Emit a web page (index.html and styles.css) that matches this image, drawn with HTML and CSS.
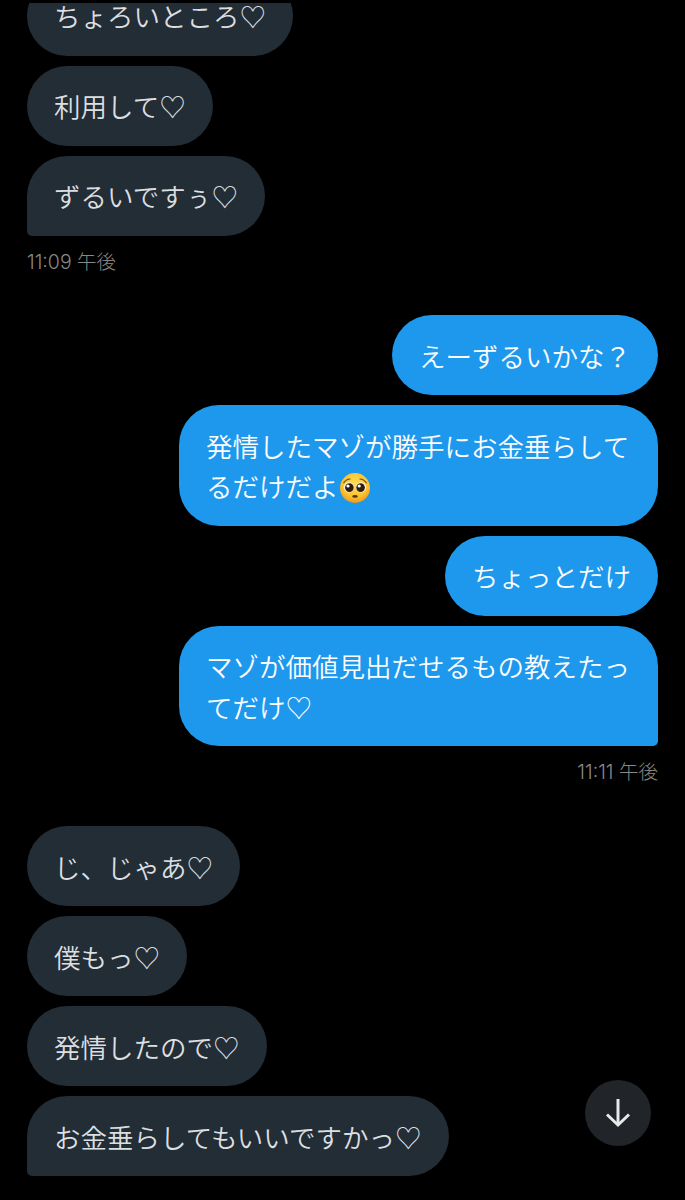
FILE: index.html
```html
<!DOCTYPE html>
<html lang="ja">
<head>
<meta charset="utf-8">
<title>メッセージ</title>
<link rel="stylesheet" href="styles.css">
</head>
<body>
<main class="viewport">
  <div class="thread">
    <section class="group received">
      <div class="bubble">ちょろいところ♡</div>
      <div class="bubble">利用して♡</div>
      <div class="bubble last">ずるいですぅ♡</div>
      <time class="stamp">11:09 午後</time>
    </section>
    <section class="group sent">
      <div class="bubble">えーずるいかな？</div>
      <div class="bubble">発情したマゾが勝手にお金垂らしてるだけだよ<svg class="emoji" viewBox="0 0 30 30" aria-label="🥺" role="img">
        <defs><radialGradient id="face" cx="50%" cy="35%" r="65%"><stop offset="0" stop-color="#ffdc55"/><stop offset="0.7" stop-color="#fac02e"/><stop offset="1" stop-color="#e99a1c"/></radialGradient></defs>
        <circle cx="15" cy="15" r="15" fill="url(#face)"/>
        <path d="M3.8 9.8 Q6 6.2 10 6 M26.2 9.8 Q24 6.2 20 6" fill="none" stroke="#6d4215" stroke-width="1.2" stroke-linecap="round"/>
        <circle cx="9" cy="14.2" r="5.2" fill="#fff3d6"/><circle cx="21" cy="14.2" r="5.2" fill="#fff3d6"/>
        <circle cx="9.4" cy="14.6" r="4.3" fill="#2e1c10"/><circle cx="20.6" cy="14.6" r="4.3" fill="#2e1c10"/>
        <circle cx="8" cy="13" r="1.6" fill="#fff"/><circle cx="19.2" cy="13" r="1.6" fill="#fff"/>
        <ellipse cx="15" cy="23.4" rx="2.8" ry="1.3" fill="#5b3412"/>
      </svg></div>
      <div class="bubble">ちょっとだけ</div>
      <div class="bubble last">マゾが価値見出だせるもの教えたってだけ♡</div>
      <time class="stamp">11:11 午後</time>
    </section>
    <section class="group received">
      <div class="bubble">じ、じゃあ♡</div>
      <div class="bubble">僕もっ♡</div>
      <div class="bubble">発情したので♡</div>
      <div class="bubble last">お金垂らしてもいいですかっ♡</div>
    </section>
  </div>
  <button class="scroll-down" type="button" aria-label="下へスクロール">
    <svg viewBox="0 0 30 30" width="30" height="30" fill="none" stroke="#e7e9ea" stroke-width="3" stroke-linejoin="miter"><path d="M15 1V27"/><path d="M4 16.5 15 27 26 16.5"/></svg>
  </button>
</main>
</body>
</html>
```
FILE: styles.css
```css
html, body {
  margin: 0;
  background: #000;
}
body {
  font-family: "Noto Sans CJK JP", "Liberation Sans", sans-serif;
  height: 1200px;
  overflow: hidden;
}
.viewport {
  position: relative;
  height: 1200px;
  padding-top: 3px;
  box-sizing: border-box;
}
.thread {
  height: 1197px;
  overflow: hidden;
  display: flex;
  flex-direction: column;
}
.group {
  display: flex;
  flex-direction: column;
  gap: 9.75px;
  padding: 0 27px;
  flex: none;
}
.group:first-child {
  margin-top: -27.5px;
}
.group + .group {
  margin-top: 41.5px;
}
.group:last-child {
  margin-top: 42px;
}
.received {
  align-items: flex-start;
}
.sent {
  align-items: flex-end;
}
.bubble {
  box-sizing: border-box;
  width: fit-content;
  max-width: 479px;
  padding: 20.875px 27px 18.875px;
  border-radius: 40px;
  font-size: 26.5px;
  line-height: 40.5px;
  font-weight: 350;
  line-break: loose;
}
.received .bubble {
  background: #232d35;
  color: #dcdfe1;
}
.sent .bubble {
  background: #1d98ec;
  color: #fbfdff;
}
.received .last {
  border-bottom-left-radius: 5px;
}
.sent .last {
  border-bottom-right-radius: 5px;
}
.emoji {
  width: 30px;
  height: 30px;
  margin-left: 1px;
  vertical-align: -6px;
}
.stamp {
  display: block;
  font-family: Inter, "Noto Sans CJK JP", sans-serif;
  font-size: 19.5px;
  font-weight: 300;
  line-height: 24px;
  color: #888;
  margin-top: 4px;
}
.scroll-down {
  position: absolute;
  left: 585px;
  top: 1080px;
  width: 66px;
  height: 66px;
  padding: 0;
  border: 0;
  border-radius: 50%;
  background: #212428;
  display: flex;
  align-items: center;
  justify-content: center;
}
```
